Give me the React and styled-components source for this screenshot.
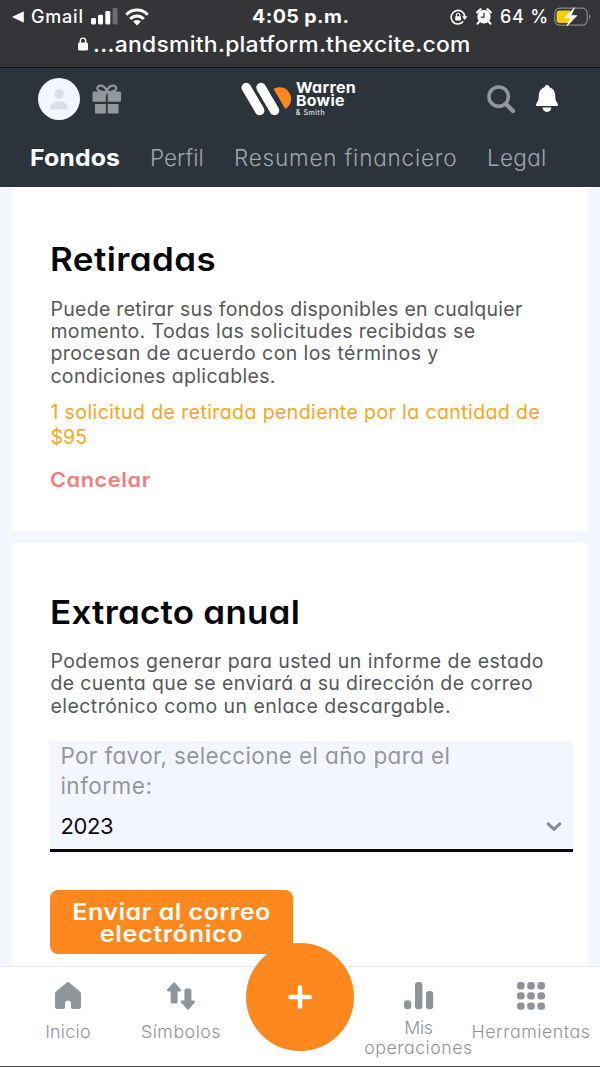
import React from 'react'
import styled, { createGlobalStyle } from 'styled-components'

const GlobalStyle = createGlobalStyle`
  * {
    box-sizing: border-box;
  }
  body {
    margin: 0;
    background: #f4f6ff;
    font-family: Inter, 'Open Sans', sans-serif;
    font-feature-settings: 'cv11';
  }
  h2, p {
    margin: 0;
  }
  svg {
    display: block;
    flex-shrink: 0;
  }
`

const Screen = styled.div`
  width: 600px;
  height: 1067px;
  overflow: hidden;
  display: flex;
  flex-direction: column;
  background: #f4f6ff;
`

/* text line with its own tracking, never wraps */
const Line = styled.span`
  display: block;
  white-space: nowrap;
  letter-spacing: ${p => p.$ls || 0}px;
`
/* wider cut for the bold texts */
const WideLine = styled(Line)`
  transform: scaleX(${p => p.$x || 1.08});
  transform-origin: ${p => (p.$center ? 'center' : 'left')};
`

const BrowserBar = styled.div`
  height: 68px;
  flex-shrink: 0;
  background: #333538;
  border-bottom: 1px solid #101416;
  color: #fff;
  font-feature-settings: normal;
`
const StatusRow = styled.div`
  display: grid;
  grid-template-columns: 1fr auto 1fr;
  height: 32px;
  align-items: center;
  padding: 1px 8px 0 12px;
  font-size: 18px;
  font-weight: 500;
`
const StatusGroup = styled.div`
  display: flex;
  align-items: center;
  justify-content: ${p => (p.$end ? 'flex-end' : 'flex-start')};
`
const Carrier = styled(Line)`
  margin: 0 7px 0 7px;
`
const Clock = styled(WideLine)`
  font-weight: 700;
  font-size: 18.5px;
  margin: -1px 9px 0 0;
`
const Percent = styled(Line)`
  margin: 0 5px 0 8px;
`
const AddressRow = styled.div`
  display: flex;
  align-items: center;
  height: 24px;
  padding-left: 78px;
  font-size: 22px;
  font-weight: 500;
`
const Address = styled(WideLine)`
  margin: -1px 0 0 4.5px;
`

const Header = styled.header`
  height: 119px;
  flex-shrink: 0;
  background: #2a343a;
`
const TopRow = styled.div`
  display: grid;
  grid-template-columns: 1fr auto 1fr;
  align-items: center;
  height: 62px;
  padding: 0 42px 0 38px;
`
const HeaderSide = styled.div`
  display: flex;
  align-items: center;
  gap: ${p => p.$gap}px;
  justify-content: ${p => (p.$end ? 'flex-end' : 'flex-start')};
`
const Avatar = styled.div`
  width: 42px;
  height: 42px;
  border-radius: 50%;
  background: #f4f6ff;
  display: flex;
  align-items: center;
  justify-content: center;
`
const Logo = styled.div`
  display: flex;
  align-items: center;
  gap: 5px;
  margin-right: 4px;
  color: #fff;
`
const LogoName = styled.div`
  font-size: 14.8px;
  line-height: 13px;
  font-weight: 700;
`
const LogoSmall = styled.div`
  font-size: 7px;
  line-height: 9px;
  font-weight: 400;
`
const Tabs = styled.nav`
  display: flex;
  height: 57px;
  padding-left: 30px;
  line-height: 56px;
`
const Tab = styled.a`
  width: ${p => p.$width}px;
  color: ${p => (p.$active ? '#fff' : '#a1a5ac')};
  font-size: ${p => (p.$active ? 23 : 22.5)}px;
  font-weight: ${p => (p.$active ? 700 : 300)};
`

const Content = styled.main`
  flex: 1;
  min-height: 0;
  overflow: hidden;
  padding: 0 12px;
`
const Card = styled.section`
  background: #fff;
  height: ${p => p.$height}px;
  padding: ${p => p.$top}px 15px 0 38.4px;
  margin-bottom: 12px;
`
const Title = styled.h2`
  font-size: 33px;
  line-height: 40px;
  font-weight: 600;
  color: #070709;
`
const Text = styled.p`
  margin-top: 18.5px;
  font-size: 19.5px;
  line-height: 22.4px;
  color: #55575b;
`
const Pending = styled.p`
  margin-top: 13px;
  font-size: 19.5px;
  line-height: 25px;
  color: #f9a51a;
`
const Cancel = styled.a`
  display: block;
  margin-top: 17.5px;
  font-size: 20px;
  line-height: 24px;
  font-weight: 600;
  color: #f47c7c;
`
const Select = styled.div`
  height: 111px;
  margin-top: 24px;
  padding: 0 11px 0 10px;
  background: #f4f6ff;
  border-bottom: 3px solid #050507;
  font-size: 22.5px;
  line-height: 30px;
`
const SelectLabel = styled.div`
  color: #9396a0;
`
const SelectValue = styled.div`
  display: flex;
  justify-content: space-between;
  align-items: center;
  height: 49px;
  color: #0a0a0c;
  font-size: 22px;
`
const SendButton = styled.button`
  display: block;
  width: 243px;
  height: 64px;
  margin-top: 38px;
  padding: 2px 0 0;
  border: 0;
  border-radius: 8px;
  background: #ff881e;
  color: #fff;
  font: 600 23px/22.4px Inter, sans-serif;
  font-feature-settings: 'cv11';
`

const BottomNav = styled.nav`
  position: relative;
  display: flex;
  height: 101px;
  flex-shrink: 0;
  background: #fff;
  border-top: 1px solid #e9ebee;
  border-bottom: 1px solid #4a4b4d;
`
const NavItem = styled.a`
  width: ${p => p.$width}px;
  padding-top: 15px;
  display: flex;
  flex-direction: column;
  align-items: center;
  color: #8e9499;
  text-align: center;
  font-size: 17.8px;
  font-weight: 300;
  line-height: 20.4px;
`
const NavLabel = styled.div`
  margin-top: ${p => (p.$two ? 8 : 12)}px;
`
const AddButton = styled.button`
  position: absolute;
  left: 246px;
  top: -24px;
  width: 108px;
  height: 108px;
  padding: 0;
  border: 0;
  border-radius: 50%;
  background: #ff881e;
  display: flex;
  align-items: center;
  justify-content: center;
`

const BackIcon = () => (
  <svg width="12" height="12" viewBox="0 0 12 12">
    <path d="M11.5 .8v10.4L.6 6z" fill="#fff" stroke="#fff" strokeWidth=".6" strokeLinejoin="round" />
  </svg>
)
const SignalIcon = () => (
  <svg width="27" height="17" viewBox="0 0 27 17" fill="#fff">
    <rect x="0" y="10" width="5" height="6.5" rx="1.4" />
    <rect x="7" y="6.7" width="5" height="9.8" rx="1.4" />
    <rect x="14.3" y="3" width="5" height="13.5" rx="1.4" />
    <rect x="21.6" y="0" width="5" height="16.5" rx="1.4" opacity=".28" />
  </svg>
)
const WifiIcon = () => (
  <svg width="24" height="18" viewBox="0 0 24 18" fill="none" stroke="#fff" strokeWidth="3">
    <path d="M1.3 6.7C7.3.5 16.7.5 22.7 6.7" />
    <path d="M5.2 11C9.2 7 14.8 7 18.8 11" />
    <path d="M8.2 13.6c2.3-2 5.3-2 7.6 0L12 17.6z" fill="#fff" stroke="none" />
  </svg>
)
const LockRotationIcon = () => (
  <svg width="18" height="16" viewBox="0 0 18 16" fill="none" stroke="#fff" strokeWidth="1.6">
    <path d="M13.2 12.6A6.8 6.8 0 1 1 14.8 8" />
    <path d="M12 7.3h5.4l-2.7 3.6z" fill="#fff" stroke="none" />
    <rect x="5.2" y="7.2" width="5.8" height="4.4" rx=".8" fill="#fff" stroke="none" />
    <path d="M6.4 7.5V6a1.7 1.7 0 0 1 3.4 0v1.5" strokeWidth="1.1" />
  </svg>
)
const AlarmIcon = () => (
  <svg width="16" height="17" viewBox="0 0 16 17">
    <path d="M1.2 4.4 4.6 1.3M14.8 4.4l-3.4-3.1M3.3 13.6l-1.7 2M12.7 13.6l1.7 2" stroke="#fff" strokeWidth="2.2" strokeLinecap="round" />
    <circle cx="8" cy="8.8" r="6.7" fill="#fff" />
    <path d="M8 4.8v4.3H4.8" fill="none" stroke="#333538" strokeWidth="1.3" />
  </svg>
)
const BatteryIcon = () => (
  <svg width="38" height="20" viewBox="0 0 38 20">
    <rect x=".8" y="1.2" width="32.4" height="17" rx="5" fill="none" stroke="#85878a" strokeWidth="1.2" />
    <path d="M5.6 3.4h10.6v12.6H5.6a3 3 0 0 1-3-3V6.4a3 3 0 0 1 3-3z" fill="#fccb0a" />
    <path d="M35 7v5.4c1.6-.6 1.6-4.8 0-5.4z" fill="#85878a" />
    <path d="M20.5.6 10.6 10.8h5.6L13 19l10-10.4h-5.8z" fill="#fff" stroke="#fff" strokeWidth=".6" strokeLinejoin="round" />
  </svg>
)
const LockIcon = () => (
  <svg width="10" height="14" viewBox="0 0 10 14">
    <rect x="0" y="5.6" width="10" height="7.9" rx="1.5" fill="#fff" />
    <path d="M2.3 6.2V3.8a2.7 2.7 0 0 1 5.4 0v2.4" fill="none" stroke="#fff" strokeWidth="1.4" />
  </svg>
)
const PersonIcon = () => (
  <svg width="18" height="21" viewBox="0 0 18 21" fill="#dcdfe8">
    <circle cx="9" cy="5" r="4.8" />
    <path d="M0 20.5v-1.3c0-4.2 4-6.7 9-6.7s9 2.5 9 6.7v1.3z" />
  </svg>
)
const GiftIcon = () => (
  <svg width="30" height="30" viewBox="0 0 30 30" fill="#93989c">
    <path d="M14.8 8C9 8.2 5 6.5 5.3 4 5.7.8 12.5-.4 14.8 7.6 17.1-.4 23.9.8 24.300 4c.3 2.500-3.700 4.200-9.500 4z" fill="none" stroke="#93989c" strokeWidth="2.2" />
    <path d="M1.8 7.5h12.1v10.2H1.8A1.3 1.3 0 0 1 .5 16.4V8.8a1.3 1.3 0 0 1 1.3-1.3zM15.7 7.5h12.1a1.3 1.3 0 0 1 1.3 1.3v7.6a1.3 1.3 0 0 1-1.3 1.3H15.7z" />
    <path d="M3 20h10.9v9.5H3.9a.9.9 0 0 1-.9-.9zM15.7 20h10.9v8.6a.9.9 0 0 1-.9.9h-10z" />
  </svg>
)
const LogoMark = () => (
  <svg width="50" height="34" viewBox="0 0 50 34">
    <path d="M5.2 5.5 18.7 28.5M20 5.5 33.5 28.5" stroke="#fff" strokeWidth="9.4" strokeLinecap="round" />
    <path d="M32.5 6.8A10.8 10.8 0 0 1 44.3 27z" fill="#ff881e" />
  </svg>
)
const SearchIcon = () => (
  <svg width="29" height="29" viewBox="0 0 29 29" fill="none" stroke="#92979d" strokeLinecap="round">
    <circle cx="11.7" cy="11.7" r="9.7" strokeWidth="3.6" />
    <path d="M18.8 18.8 26 26" strokeWidth="4.4" />
  </svg>
)
const BellIcon = () => (
  <svg width="22" height="28" viewBox="0 0 22 28" fill="#fff">
    <path d="M11 0c1.5 0 2.3.9 2.4 2.2 3.8 1 5.6 4.3 5.8 8.3.2 4.5.7 5.6 2.4 8 .8 1.3.4 2.5-1 2.5H1.4c-1.4 0-1.8-1.2-1-2.5 1.7-2.4 2.2-3.5 2.4-8 .2-4 2-7.3 5.8-8.3C8.7.9 9.5 0 11 0z" />
    <path d="M6.6 22.6h8.8c-.2 2.9-2 4.4-4.4 4.4s-4.2-1.5-4.4-4.4z" />
  </svg>
)
const ChevronIcon = () => (
  <svg width="16" height="10" viewBox="0 0 16 10" fill="none" stroke="#878a93" strokeWidth="3" strokeLinecap="round" strokeLinejoin="round">
    <path d="M2.2 2.8 8 8.3 13.8 2.8" />
  </svg>
)
const HomeIcon = () => (
  <svg width="28" height="28" viewBox="0 0 28 28" fill="#8e969b">
    <path d="M12.3.9a2.5 2.5 0 0 1 3.4 0l10.2 8.6a3 3 0 0 1 1.1 2.3v12.7a2.5 2.5 0 0 1-2.5 2.5h-5.8a1.8 1.8 0 0 1-1.8-1.800v-3.700a2.4 2.4 0 0 0-5.800 0v3.700A1.8 1.8 0 0 1 9.300 27H3.500A2.500 2.500 0 0 1 1 24.500V11.800a3 3 0 0 1 1.100-2.300z" />
  </svg>
)
const ArrowsIcon = () => (
  <svg width="30" height="28" viewBox="0 0 30 28" fill="#8e969b" stroke="#8e969b" strokeWidth="2.4" strokeLinejoin="round">
    <path d="M8.1 1.500 14 8.200H10.400V19.600a.8.8 0 0 1-.8.8H6.600a.8.8 0 0 1-.8-.8V8.200H2.200z" />
    <path d="M21.900 26.500 27.800 19.800H24.200V8.400a.8.8 0 0 0-.8-.8H20.400a.8.8 0 0 0-.8.8V19.800H16z" />
  </svg>
)
const PlusIcon = () => (
  <svg width="24" height="24" viewBox="0 0 24 24" stroke="#fff" strokeWidth="4.4" strokeLinecap="round">
    <path d="M12 2.3v19.4M2.3 12h19.4" />
  </svg>
)
const BarsIcon = () => (
  <svg width="30" height="28" viewBox="0 0 30 28" fill="#8e9499">
    <rect x="0" y="18.2" width="7.2" height="9" rx="3.2" />
    <rect x="11" y="0" width="7.4" height="27.2" rx="3" />
    <rect x="22" y="9" width="7.2" height="18.2" rx="3" />
  </svg>
)
const GridIcon = () => (
  <svg width="28" height="28" viewBox="0 0 28 28" fill="#8e9499">
    {[0, 10.2, 20.4].map(y => [0, 10.2, 20.4].map(x => (
      <rect key={x + '-' + y} x={x} y={y} width="7.6" height="7.4" rx="3" />
    )))}
  </svg>
)

export default function App() {
  return (
    <Screen>
      <GlobalStyle />
      <BrowserBar>
        <StatusRow>
          <StatusGroup>
            <BackIcon />
            <Carrier $ls={0.8}>Gmail</Carrier>
            <SignalIcon />
            <svg width="7" height="1" />
            <WifiIcon />
          </StatusGroup>
          <Clock $ls={0.4} $x={1.06}>4:05 p.m.</Clock>
          <StatusGroup $end>
            <LockRotationIcon />
            <svg width="8" height="1" />
            <AlarmIcon />
            <Percent $ls={0.8}>64 %</Percent>
            <BatteryIcon />
          </StatusGroup>
        </StatusRow>
        <AddressRow>
          <LockIcon />
          <Address $ls={0.28} $x={1.04}>...andsmith.platform.thexcite.com</Address>
        </AddressRow>
      </BrowserBar>

      <Header>
        <TopRow>
          <HeaderSide $gap={12}>
            <Avatar><PersonIcon /></Avatar>
            <GiftIcon />
          </HeaderSide>
          <Logo>
            <LogoMark />
            <div>
              <LogoName>
                <WideLine $ls={0.3} $x={1.08}>Warren</WideLine>
                <WideLine $ls={0.3} $x={1.07}>Bowie</WideLine>
              </LogoName>
              <LogoSmall><Line $ls={0.6}>& Smith</Line></LogoSmall>
            </div>
          </Logo>
          <HeaderSide $gap={20} $end>
            <SearchIcon />
            <BellIcon />
          </HeaderSide>
        </TopRow>
        <Tabs>
          <Tab $width={120} $active><WideLine $ls={0.1}>Fondos</WideLine></Tab>
          <Tab $width={84}><Line $ls={0}>Perfil</Line></Tab>
          <Tab $width={253}><Line $ls={0.8}>Resumen financiero</Line></Tab>
          <Tab $width={80}><Line $ls={0.3}>Legal</Line></Tab>
        </Tabs>
      </Header>

      <Content>
        <Card $height={344} $top={52}>
          <Title><WideLine $ls={0.4} $x={1.06}>Retiradas</WideLine></Title>
          <Text>
            <Line $ls={0.3}>Puede retirar sus fondos disponibles en cualquier</Line>
            <Line $ls={0.37}>momento. Todas las solicitudes recibidas se</Line>
            <Line $ls={0.42}>procesan de acuerdo con los términos y</Line>
            <Line $ls={0.34}>condiciones aplicables.</Line>
          </Text>
          <Pending>
            <Line $ls={0.4}>1 solicitud de retirada pendiente por la cantidad de</Line>
            <Line $ls={0.1}>$95</Line>
          </Pending>
          <Cancel><WideLine $ls={0.6}>Cancelar</WideLine></Cancel>
        </Card>

        <Card $height={440} $top={48.5}>
          <Title><WideLine $ls={0.2} $x={1.06}>Extracto anual</WideLine></Title>
          <Text>
            <Line $ls={0.46}>Podemos generar para usted un informe de estado</Line>
            <Line $ls={0.36}>de cuenta que se enviará a su dirección de correo</Line>
            <Line $ls={0.46}>electrónico como un enlace descargable.</Line>
          </Text>
          <Select>
            <SelectLabel>
              <Line $ls={0.37}>Por favor, seleccione el año para el</Line>
              <Line $ls={0.5}>informe:</Line>
            </SelectLabel>
            <SelectValue>
              <Line $ls={-0.4}>2023</Line>
              <ChevronIcon />
            </SelectValue>
          </Select>
          <SendButton>
            <WideLine $ls={0.4} $x={1.09} $center>Enviar al correo</WideLine>
            <WideLine $ls={0.6} $x={1.09} $center>electrónico</WideLine>
          </SendButton>
        </Card>
      </Content>

      <BottomNav>
        <NavItem $width={136}>
          <HomeIcon />
          <NavLabel><Line $ls={0.3}>Inicio</Line></NavLabel>
        </NavItem>
        <NavItem $width={90}>
          <ArrowsIcon />
          <NavLabel><Line $ls={0.5}>Símbolos</Line></NavLabel>
        </NavItem>
        <NavItem $width={137} />
        <NavItem $width={111}>
          <BarsIcon />
          <NavLabel $two>
            <Line $ls={-0.3}>Mis</Line>
            <Line $ls={0.5}>operaciones</Line>
          </NavLabel>
        </NavItem>
        <NavItem $width={114}>
          <GridIcon />
          <NavLabel><Line $ls={0.55}>Herramientas</Line></NavLabel>
        </NavItem>
        <AddButton><PlusIcon /></AddButton>
      </BottomNav>
    </Screen>
  )
}
